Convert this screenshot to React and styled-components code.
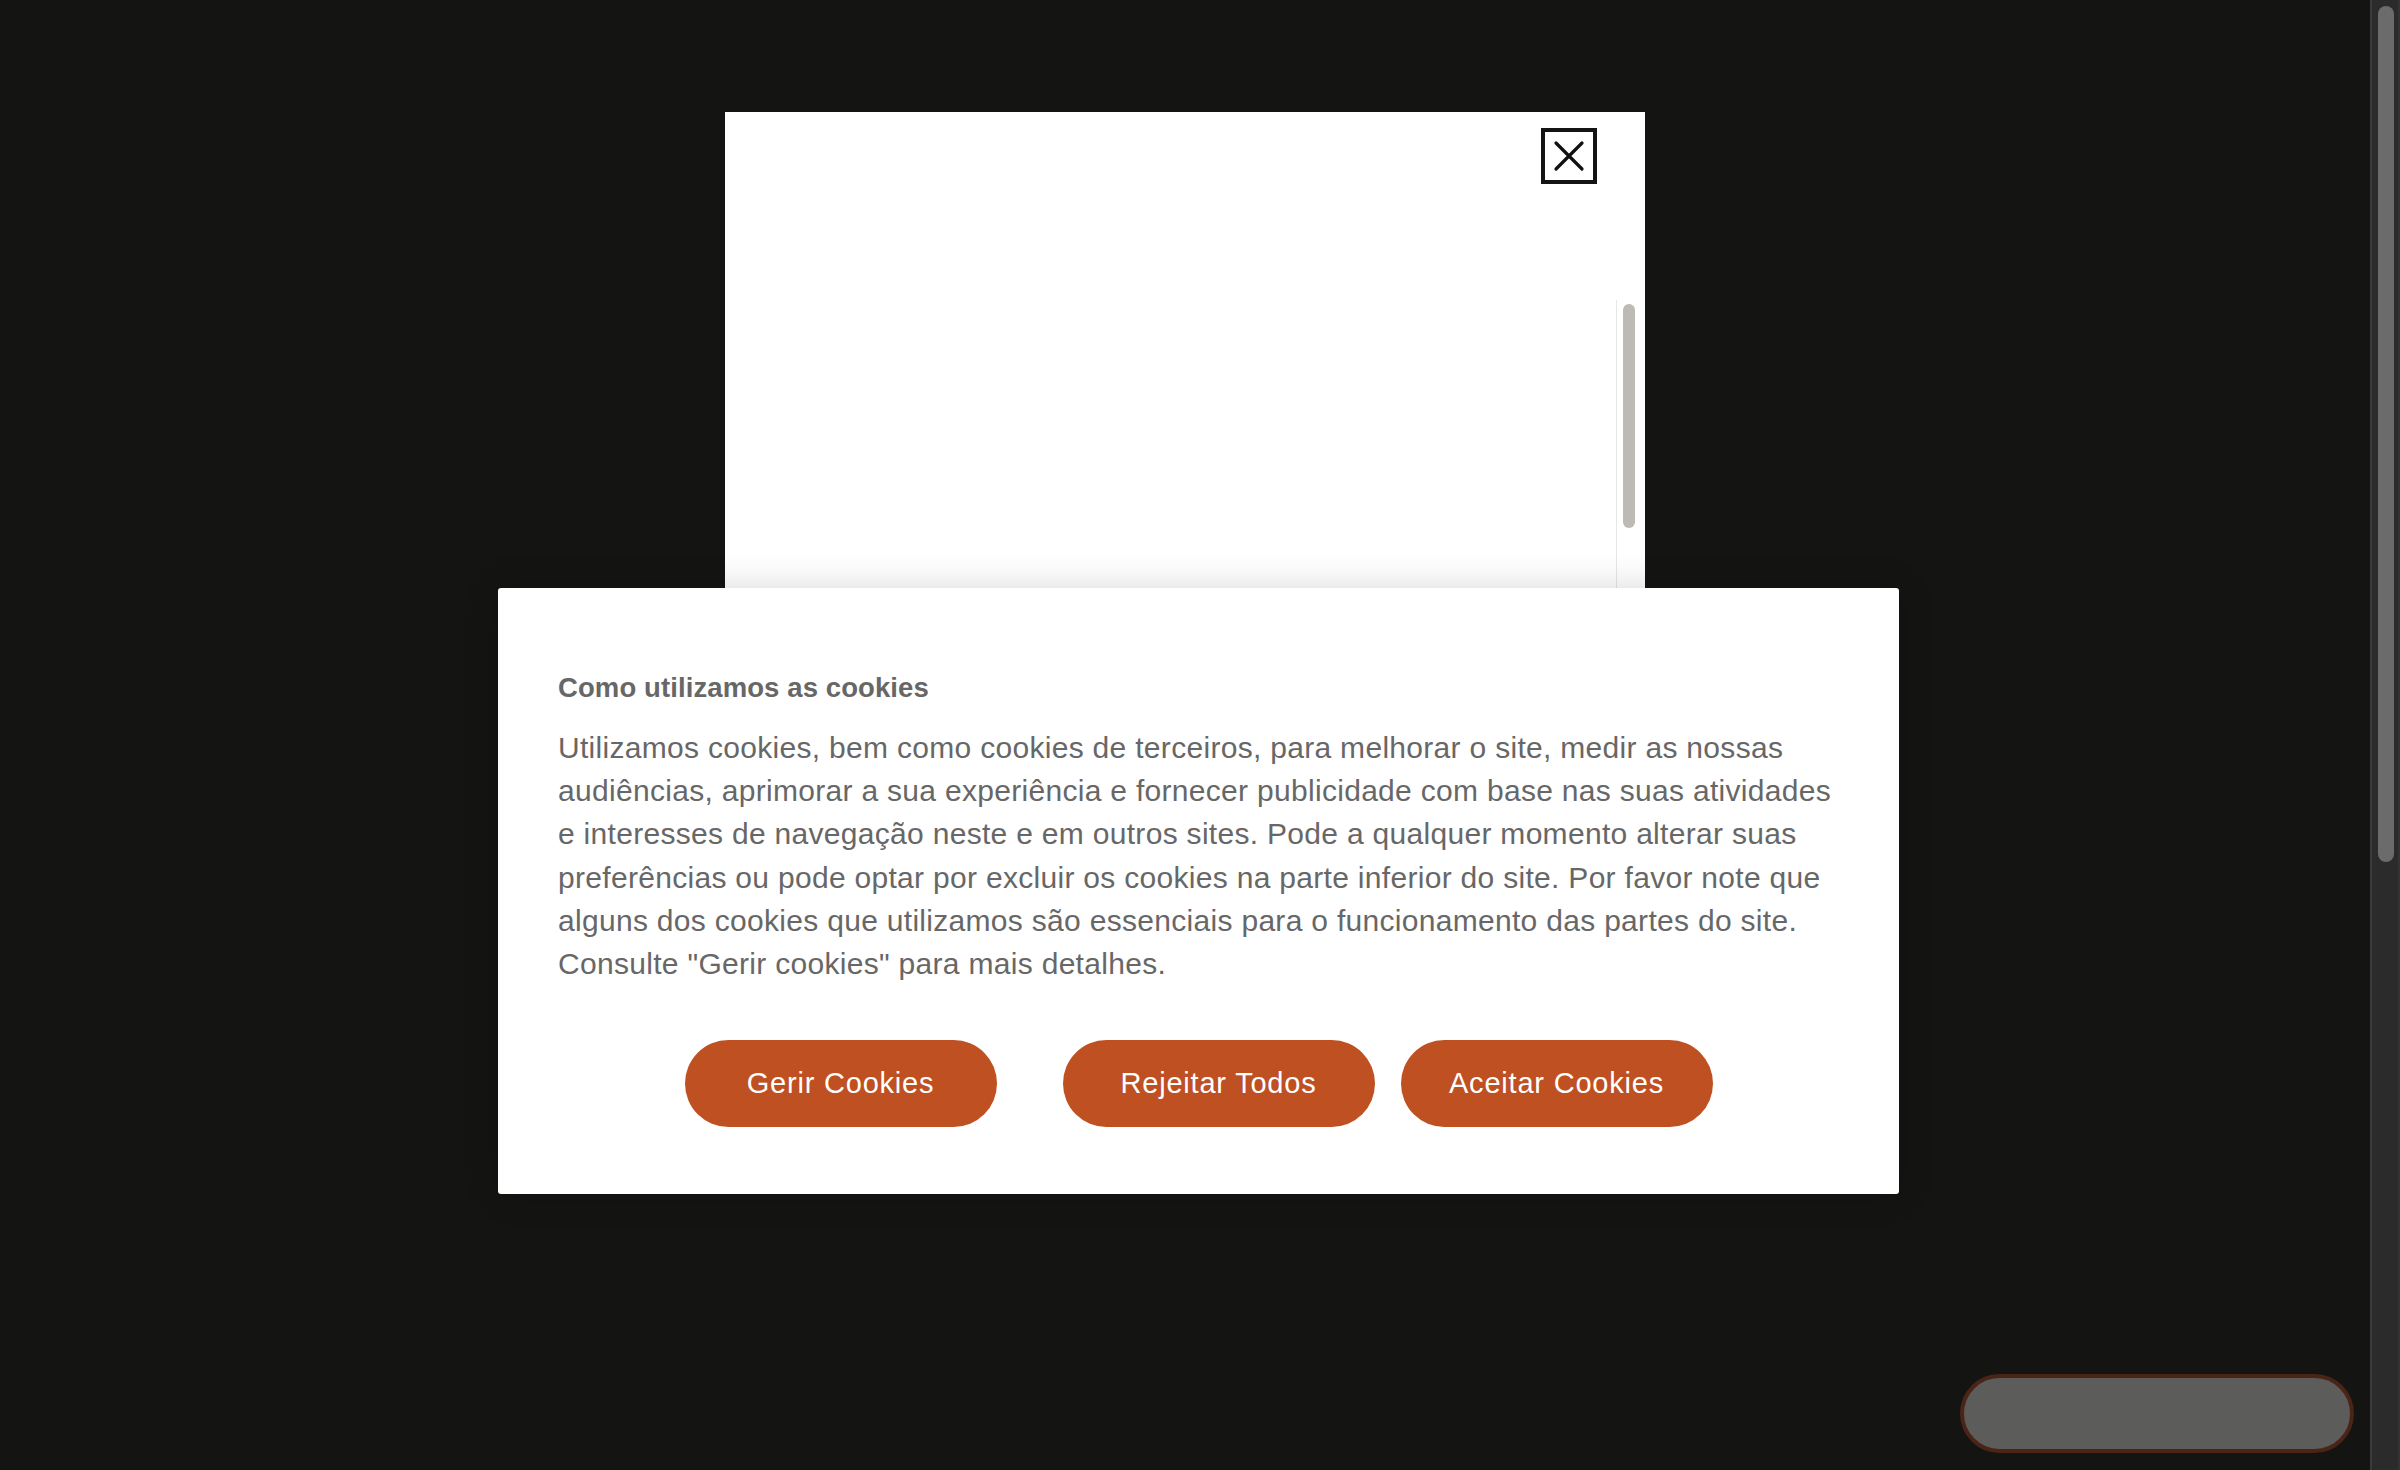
import React from "react";
import styled, { createGlobalStyle } from "styled-components";

const GlobalStyle = createGlobalStyle`
  html, body {
    margin: 0;
    padding: 0;
    background: #141412;
    overflow: hidden;
  }
  * {
    box-sizing: border-box;
  }
`;

const Page = styled.div`
  display: flex;
  width: 100%;
  height: 1470px;
  font-family: "Liberation Sans", Arial, Helvetica, sans-serif;
`;

const Main = styled.div`
  position: relative;
  flex: 1;
  display: flex;
  justify-content: center;
  align-items: flex-start;
  padding-top: 112px;
`;

const Modal = styled.div`
  width: 920px;
  height: 900px;
  background: #ffffff;
  display: flex;
  flex-direction: column;
`;

const ModalHeader = styled.div`
  height: 188px;
  display: flex;
  justify-content: flex-end;
  align-items: flex-start;
  padding: 16px 48px 0 0;
`;

const CloseButton = styled.button`
  width: 56px;
  height: 56px;
  border: 4px solid #141414;
  background: #ffffff;
  padding: 0;
  display: flex;
  align-items: center;
  justify-content: center;
  cursor: pointer;
`;

const ModalBody = styled.div`
  flex: 1;
  display: flex;
`;

const BodyContent = styled.div`
  flex: 1;
`;

const Track = styled.div`
  width: 29px;
  border-left: 1px solid #e6e6e4;
  padding: 4px 0 0 6px;
`;

const Thumb = styled.div`
  width: 12px;
  height: 224px;
  border-radius: 6px;
  background: #bdbab5;
`;

const Banner = styled.div`
  position: absolute;
  left: 498px;
  top: 588px;
  width: 1401px;
  background: #ffffff;
  border-radius: 3px;
  box-shadow: 0 0 36px rgba(0, 0, 0, 0.16);
  padding: 85px 52px 67px 60px;
  color: #676767;
`;

const Heading = styled.h2`
  margin: 0 0 23px;
  font-size: 27.5px;
  line-height: 30px;
  font-weight: 700;
  letter-spacing: 0.1px;
`;

const Copy = styled.p`
  margin: 0 0 55px;
  font-size: 30px;
  line-height: 43.2px;
  letter-spacing: 0.3px;
`;

const Actions = styled.div`
  display: flex;
  justify-content: center;
  margin-right: 8px;
`;

const ActionButton = styled.button`
  width: 312px;
  height: 87px;
  border: none;
  border-radius: 44px;
  background: #bf5022;
  color: #ffffff;
  font-family: "Liberation Sans", Arial, Helvetica, sans-serif;
  font-size: 29px;
  letter-spacing: 0.8px;
  margin-right: ${(p) => p.$gap || 0}px;
  cursor: pointer;
`;

const ChatPill = styled.div`
  position: absolute;
  left: 1960px;
  top: 1374px;
  width: 394px;
  height: 79px;
  border-radius: 40px;
  border: 4px solid #4a2417;
  background: #5c5c5a;
`;

const PageScrollbar = styled.div`
  width: 30px;
  height: 100%;
  background: #2b2b2b;
  border-left: 2px solid #3a3a3a;
  border-right: 2px solid #333333;
  padding: 6px 0 0 6px;
`;

const PageThumb = styled.div`
  width: 16px;
  height: 856px;
  border-radius: 8px;
  background: #6b6b6b;
`;

const CloseIcon = () => (
  <svg width="48" height="48" viewBox="0 0 48 48">
    <path
      d="M11 11 L37 37 M37 11 L11 37"
      stroke="#111111"
      strokeWidth="3.2"
      strokeLinecap="round"
      fill="none"
    />
  </svg>
);

export default function App() {
  return (
    <>
      <GlobalStyle />
      <Page>
        <Main>
          <Modal>
            <ModalHeader>
              <CloseButton aria-label="Fechar">
                <CloseIcon />
              </CloseButton>
            </ModalHeader>
            <ModalBody>
              <BodyContent />
              <Track>
                <Thumb />
              </Track>
            </ModalBody>
          </Modal>

          <Banner>
            <Heading>Como utilizamos as cookies</Heading>
            <Copy>
              Utilizamos cookies, bem como cookies de terceiros, para melhorar o
              site, medir as nossas audiências, aprimorar a sua experiência e
              fornecer publicidade com base nas suas atividades e interesses de
              navegação neste e em outros sites. Pode a qualquer momento alterar
              suas preferências ou pode optar por excluir os cookies na parte
              inferior do site. Por favor note que alguns dos cookies que
              utilizamos são essenciais para o funcionamento das partes do site.
              Consulte "Gerir cookies" para mais detalhes.
            </Copy>
            <Actions>
              <ActionButton $gap={66}>Gerir Cookies</ActionButton>
              <ActionButton $gap={26}>Rejeitar Todos</ActionButton>
              <ActionButton>Aceitar Cookies</ActionButton>
            </Actions>
          </Banner>

          <ChatPill />
        </Main>
        <PageScrollbar>
          <PageThumb />
        </PageScrollbar>
      </Page>
    </>
  );
}
